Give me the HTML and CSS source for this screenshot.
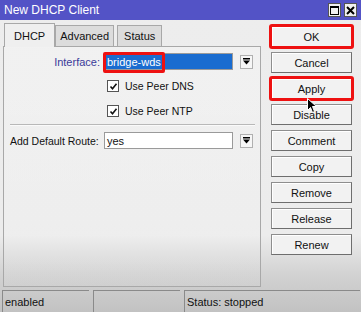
FILE: index.html
```html
<!DOCTYPE html>
<html>
<head>
<meta charset="utf-8">
<link rel="stylesheet" href="styles.css">
</head>
<body>
<div class="window">
  <div class="titlebar">
    <span class="title">New DHCP Client</span>
    <div class="title-btns">
      <span class="tbtn"><svg width="11" height="11" viewBox="0 0 11 11"><rect x="1.5" y="1.5" width="8" height="8" fill="none" stroke="#000" stroke-width="1"/><line x1="1.5" y1="2" x2="9.5" y2="2" stroke="#000" stroke-width="2"/></svg></span>
      <span class="tbtn"><svg width="11" height="11" viewBox="0 0 11 11"><path d="M2 2 L9 9 M9 2 L2 9" stroke="#000" stroke-width="2"/></svg></span>
    </div>
  </div>
  <div class="main">
    <div class="left">
      <div class="tabs">
        <div class="tab sel">DHCP</div>
        <div class="tab">Advanced</div>
        <div class="tab last">Status</div>
      </div>
      <div class="panel">
        <div class="row r-iface">
          <span class="lbl blue">Interface:</span>
          <span class="field selected">
            <span class="seltext">bridge-wds</span>
            <span class="mark"></span>
          </span>
          <span class="dd"><svg width="9" height="9" viewBox="0 0 9 9"><rect x="1" y="1" width="7" height="1.5" fill="#000"/><path d="M1 3.5 H8 L4.5 7.5 Z" fill="#000"/></svg></span>
        </div>
        <div class="row chk-row">
          <span class="chk"><svg width="9" height="9" viewBox="0 0 9 9"><path d="M1.5 4.5 L3.5 6.8 L7.5 1.8" fill="none" stroke="#111" stroke-width="1.6"/></svg></span>
          <span>Use Peer DNS</span>
        </div>
        <div class="row chk-row">
          <span class="chk"><svg width="9" height="9" viewBox="0 0 9 9"><path d="M1.5 4.5 L3.5 6.8 L7.5 1.8" fill="none" stroke="#111" stroke-width="1.6"/></svg></span>
          <span>Use Peer NTP</span>
        </div>
        <div class="sep"></div>
        <div class="row r-route">
          <span class="lbl left-lbl">Add Default Route:</span>
          <span class="field">yes</span>
          <span class="dd"><svg width="9" height="9" viewBox="0 0 9 9"><rect x="1" y="1" width="7" height="1.5" fill="#000"/><path d="M1 3.5 H8 L4.5 7.5 Z" fill="#000"/></svg></span>
        </div>
      </div>
    </div>
    <div class="right">
      <button class="btn hl">OK</button>
      <button class="btn">Cancel</button>
      <button class="btn hl">Apply</button>
      <button class="btn">Disable</button>
      <button class="btn">Comment</button>
      <button class="btn">Copy</button>
      <button class="btn">Remove</button>
      <button class="btn">Release</button>
      <button class="btn">Renew</button>
      <svg class="cursor" width="11" height="16" viewBox="0 0 11 16"><path d="M0.5 0.5 L0.5 12.5 L3.5 9.5 L5.5 14.5 L7.5 13.5 L5.5 8.5 L9.5 8.5 Z" fill="#000" stroke="#fff" stroke-width="1"/></svg>
    </div>
  </div>
  <div class="statusbar">
    <div class="cell c1">enabled</div>
    <div class="cell c2"></div>
    <div class="cell c3">Status: stopped</div>
  </div>
</div>
</body>
</html>
```

FILE: styles.css
```css
html, body {
  margin: 0;
  padding: 0;
}
body {
  width: 361px;
  height: 312px;
  overflow: hidden;
  font-family: "Liberation Sans", Arial, sans-serif;
  font-size: 11px;
  color: #111;
}
.window {
  width: 361px;
  height: 312px;
  display: flex;
  flex-direction: column;
  background: linear-gradient(#ededed 0, #ececec 235px, #d2d2d2 275px, #c2c2c2 312px);
}
.titlebar {
  height: 20px;
  flex: none;
  background: #5353c6;
  color: #fff;
  display: flex;
  align-items: center;
  justify-content: space-between;
  padding-left: 4px;
  font-size: 12px;
}
.title-btns {
  display: flex;
  gap: 3px;
  margin-right: 4px;
}
.tbtn {
  width: 13px;
  height: 14px;
  background: #f0f0f0;
  border: 1px solid #555;
  display: flex;
  align-items: center;
  justify-content: center;
  box-sizing: border-box;
}
.main {
  flex: 1;
  display: flex;
  position: relative;
}
.left {
  width: 258px;
  margin-left: 3px;
  padding-top: 2px;
  margin-bottom: 3px;
  display: flex;
  flex-direction: column;
}
.tabs {
  height: 24px;
  display: flex;
  align-items: flex-end;
  padding-left: 1px;
}
.tab {
  height: 21px;
  box-sizing: border-box;
  border: 1px solid #a8a8a8;
  border-bottom: none;
  background: #dcdcdc;
  padding: 0 4px;
  display: flex;
  align-items: center;
  margin-right: 2px;
}
.tab.last {
  padding: 0 6px;
  margin-left: 1px;
}
.tab.sel {
  height: 24px;
  background: #efefef;
  padding: 0 9px;
  margin-right: 0;
  position: relative;
  top: 1px;
}
.panel {
  flex: 1;
  border: 1px solid #a8a8a8;
  background: linear-gradient(rgba(255,255,255,0.25), rgba(255,255,255,0.05));
  padding-top: 6px;
  display: flex;
  flex-direction: column;
}
.row {
  display: flex;
  align-items: center;
}
.lbl {
  width: 96px;
  text-align: right;
  margin-right: 4px;
  white-space: nowrap;
}
.blue {
  color: #3a3a9a;
}
.left-lbl {
  text-align: left;
  padding-left: 6px;
  width: 90px;
  font-size: 10.5px;
}
.field {
  width: 129px;
  height: 17px;
  box-sizing: border-box;
  border: 1px solid #9a9a9a;
  background: #fff;
  display: flex;
  align-items: center;
  padding-left: 2px;
  position: relative;
}
.field.selected {
  background: #1a6cd0;
  color: #fff;
}
.mark {
  position: absolute;
  left: -2px;
  top: -2px;
  width: 62px;
  height: 21px;
  box-sizing: border-box;
  border: 3px solid #ee1111;
  border-radius: 2px;
}
.dd {
  width: 13px;
  height: 14px;
  box-sizing: border-box;
  border: 1px solid #b0b0b0;
  background: #f6f6f6;
  margin-left: 7px;
  display: flex;
  align-items: center;
  justify-content: center;
}
.chk-row {
  padding-left: 103px;
  height: 12px;
  gap: 6px;
  font-size: 10.5px;
}
.r-iface + .chk-row {
  margin-top: 10px;
}
.chk-row + .chk-row {
  margin-top: 13px;
}
.chk {
  width: 12px;
  height: 12px;
  box-sizing: border-box;
  border: 1px solid #555;
  background: #fff;
  display: flex;
  align-items: center;
  justify-content: center;
}
.sep {
  height: 1px;
  background: #b8b8b8;
  border-bottom: 1px solid #fafafa;
  margin: 7px 5px 0 6px;
}
.r-route {
  margin-top: 6px;
}
.right {
  flex: 1;
  display: flex;
  flex-direction: column;
  gap: 5px;
  padding-top: 6px;
  padding-left: 10px;
  position: relative;
}
.btn {
  width: 81px;
  height: 21px;
  box-sizing: border-box;
  border: 1px solid #8e8e8e;
  border-right-color: #6e6e6e;
  border-bottom-color: #6e6e6e;
  background: #f2f2f2;
  box-shadow: inset 1px 1px 0 #fff;
  font-family: "Liberation Sans", Arial, sans-serif;
  font-size: 11px;
  color: #111;
  padding: 0;
}
.btn.hl {
  outline: 3px solid #ee1111;
  outline-offset: -1px;
  border-radius: 1px;
}
.cursor {
  position: absolute;
  left: 46px;
  top: 78px;
}
.statusbar {
  height: 22px;
  flex: none;
  display: flex;
  padding-left: 2px;
  gap: 4px;
}
.cell {
  height: 22px;
  box-sizing: border-box;
  border-top: 1px solid #8a8a8a;
  border-left: 1px solid #8a8a8a;
  padding-left: 2px;
  display: flex;
  align-items: center;
}
.c1 { width: 87px; }
.c2 { width: 87px; }
.c3 { width: 176px; }
```
